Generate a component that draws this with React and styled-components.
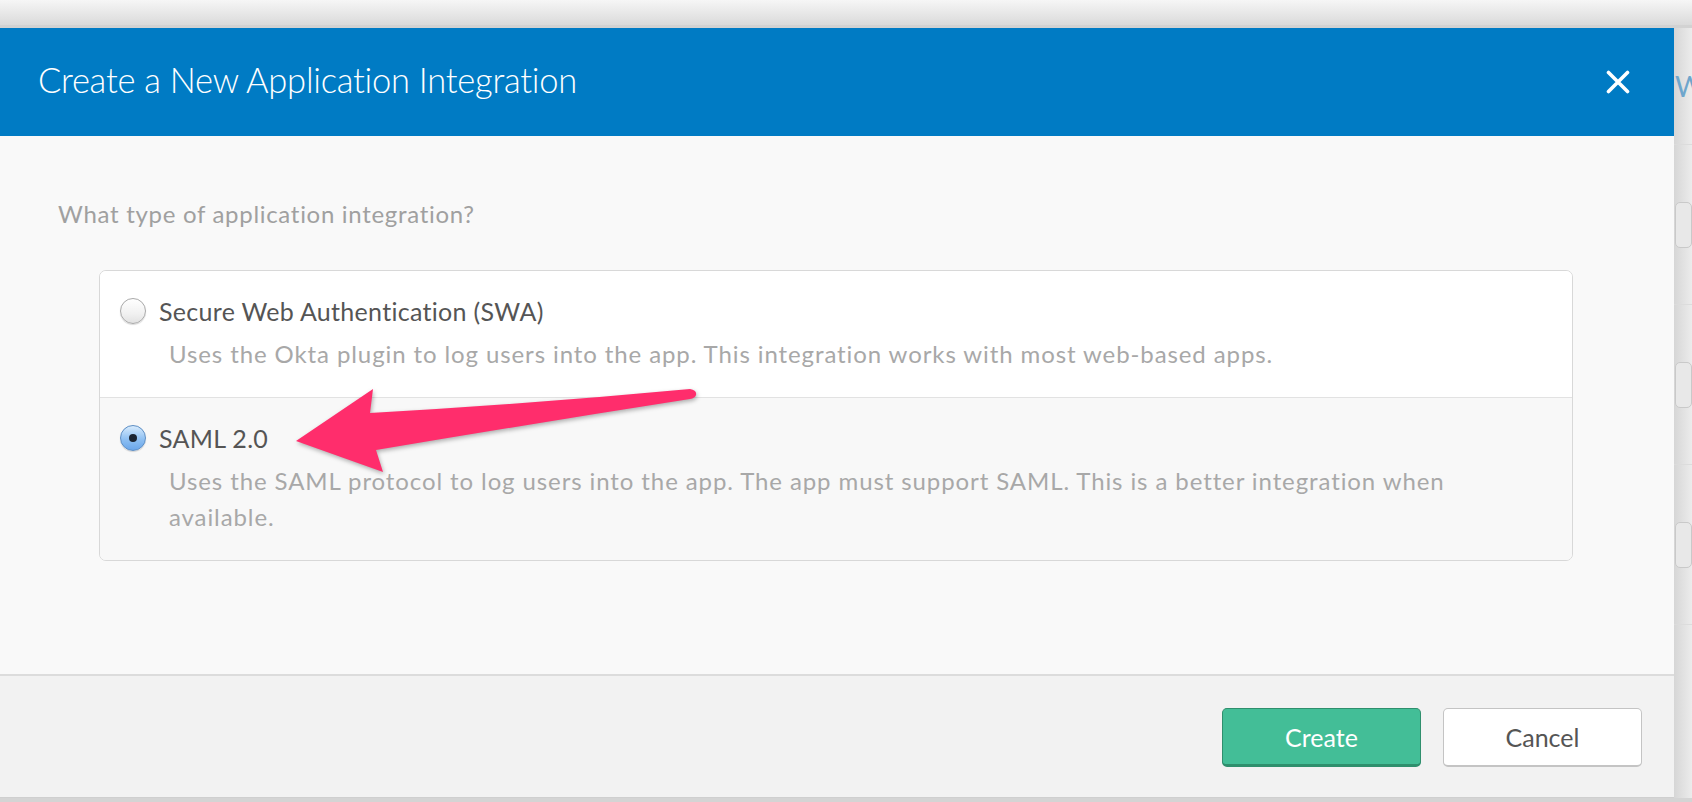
import React, { useState } from "react";
import styled, { createGlobalStyle } from "styled-components";

const GlobalStyle = createGlobalStyle`
  html, body {
    margin: 0;
    padding: 0;
    background: #e6e6e6;
    font-family: "Lato", "Open Sans", "Liberation Sans", sans-serif;
  }
`;

const Page = styled.div`
  width: 1692px;
  height: 802px;
  display: flex;
  flex-direction: column;
  overflow: hidden;
  position: relative;
`;

const TopShade = styled.div`
  height: 25px;
  background: linear-gradient(#f6f6f6, #dadada);
  border-bottom: 3px solid #d2d2d2;
`;

const Row = styled.div`
  display: flex;
  flex: 1;
  min-height: 0;
`;

const Modal = styled.div`
  width: 1674px;
  display: flex;
  flex-direction: column;
  background: #f9f9f9;
  position: relative;
`;

const Header = styled.div`
  height: 108px;
  background: #007bc4;
  display: flex;
  align-items: center;
  justify-content: space-between;
  padding: 0 44px 0 38px;
  box-sizing: border-box;
`;

const Title = styled.h1`
  margin: 0;
  color: #fff;
  font-size: 34.5px;
  font-weight: 300;
  letter-spacing: -0.25px;
  padding-bottom: 6px;
`;

const CloseButton = styled.button`
  width: 24px;
  height: 24px;
  padding: 0;
  border: none;
  background: none;
  cursor: pointer;
  display: flex;
`;

const Body = styled.div`
  flex: 1;
  padding: 63px 101px 0 58px;
`;

const Question = styled.p`
  margin: 0 0 41px;
  color: #a0a0a0;
  font-size: 24px;
  letter-spacing: 0.7px;
  line-height: 30px;
`;

const Card = styled.div`
  margin-left: 41px;
  border: 1px solid #d8d8d8;
  border-radius: 7px;
  overflow: hidden;
  background: #fff;
`;

const Option = styled.label`
  display: block;
  padding: 26px 20px ${(p) => (p.$last ? "25px" : "25px")};
  background: ${(p) => (p.$shaded ? "#f8f8f8" : "#fff")};
  border-top: ${(p) => (p.$divider ? "1px solid #e2e2e2" : "none")};
  cursor: pointer;
`;

const OptionHead = styled.div`
  display: flex;
  align-items: center;
  gap: 13px;
`;

const Radio = styled.span`
  width: 26px;
  height: 26px;
  border-radius: 50%;
  box-sizing: border-box;
  position: relative;
  flex-shrink: 0;
  border: 1px solid ${(p) => (p.$checked ? "#5d8ec4" : "#a9a9a9")};
  background: ${(p) =>
    p.$checked
      ? "linear-gradient(#d7ebfd, #8fc0f2 55%, #6aa6ea)"
      : "linear-gradient(#ffffff, #f1f1f1 60%, #e2e2e2)"};
  box-shadow: 0 1px 1px rgba(0, 0, 0, 0.15);

  &::after {
    content: "";
    display: ${(p) => (p.$checked ? "block" : "none")};
    position: absolute;
    left: 50%;
    top: 50%;
    width: 8px;
    height: 8px;
    margin: -4px 0 0 -4px;
    border-radius: 50%;
    background: #1b2532;
  }
`;

const OptionLabel = styled.span`
  color: #555;
  font-size: 25px;
  letter-spacing: 0.3px;
  line-height: 28px;
`;

const Description = styled.p`
  margin: 11px 80px 0 49px;
  color: #a8a8a8;
  font-size: 24px;
  letter-spacing: 0.9px;
  line-height: 36px;
`;

const Footer = styled.div`
  height: 124px;
  box-sizing: border-box;
  border-top: 2px solid #dcdcdc;
  border-bottom: 1px solid #cfcfcf;
  background: #f2f2f2;
  display: flex;
  align-items: center;
  justify-content: flex-end;
  gap: 22px;
  padding: 2px 32px 0 0;
`;

const Button = styled.button`
  width: 199px;
  height: 59px;
  border-radius: 5px;
  font-family: inherit;
  font-size: 25px;
  cursor: pointer;
  border: 1px solid ${(p) => (p.$primary ? "#2f8f6d" : "#c4c4c4")};
  border-bottom-width: ${(p) => (p.$primary ? "3px" : "2px")};
  background: ${(p) => (p.$primary ? "#43be97" : "#fff")};
  color: ${(p) => (p.$primary ? "#fff" : "#555")};
`;

const SideStrip = styled.div`
  flex: 1;
  background: linear-gradient(90deg, #d6d6d6, #ececec);
  overflow: hidden;
  display: flex;
  flex-direction: column;
`;

const SideLink = styled.div`
  height: 117px;
  color: #6ea6cc;
  font-size: 28px;
  line-height: 28px;
  padding: 44px 0 0 1px;
  box-sizing: border-box;
  border-bottom: 1px solid #dcdcdc;
  white-space: nowrap;
`;

const SideRow = styled.div`
  height: 159px;
  border-bottom: 1px solid #dcdcdc;
  display: flex;
  align-items: center;
  padding-left: 1px;
`;

const SideBox = styled.div`
  width: 40px;
  height: 44px;
  border: 1px solid #c9c9c9;
  border-radius: 5px;
  background: #e8e8e8;
`;

const BottomShade = styled.div`
  height: 4px;
  background: #d4d4d4;
`;

const Arrow = styled.svg`
  position: absolute;
  left: 280px;
  top: 370px;
  width: 440px;
  height: 110px;
  pointer-events: none;
  filter: drop-shadow(1px 2px 2px rgba(0, 0, 0, 0.3));
`;

const options = [
  {
    id: "swa",
    label: "Secure Web Authentication (SWA)",
    text: "Uses the Okta plugin to log users into the app. This integration works with most web-based apps.",
  },
  {
    id: "saml",
    label: "SAML 2.0",
    text: "Uses the SAML protocol to log users into the app. The app must support SAML. This is a better integration when available.",
  },
];

const App = () => {
  const [selected, setSelected] = useState("saml");

  return (
    <Page>
      <GlobalStyle />
      <TopShade />
      <Row>
        <Modal>
          <Header>
            <Title>Create a New Application Integration</Title>
            <CloseButton aria-label="Close">
              <svg width="24" height="24" viewBox="0 0 24 24">
                <path
                  d="M2.5 2.5 L21.5 21.5 M21.5 2.5 L2.5 21.5"
                  stroke="#fff"
                  strokeWidth="3.6"
                  strokeLinecap="round"
                />
              </svg>
            </CloseButton>
          </Header>
          <Body>
            <Question>What type of application integration?</Question>
            <Card>
              {options.map((o, i) => (
                <Option
                  key={o.id}
                  $shaded={i > 0}
                  $divider={i > 0}
                  $last={i === options.length - 1}
                  onClick={() => setSelected(o.id)}
                >
                  <OptionHead>
                    <Radio $checked={selected === o.id} />
                    <OptionLabel>{o.label}</OptionLabel>
                  </OptionHead>
                  <Description>{o.text}</Description>
                </Option>
              ))}
            </Card>
          </Body>
          <Footer>
            <Button $primary>Create</Button>
            <Button>Cancel</Button>
          </Footer>
        </Modal>
        <SideStrip>
          <SideLink>W</SideLink>
          <SideRow>
            <SideBox />
          </SideRow>
          <SideRow>
            <SideBox />
          </SideRow>
          <SideRow>
            <SideBox />
          </SideRow>
        </SideStrip>
      </Row>
      <BottomShade />
      <Arrow viewBox="280 370 440 110">
        <path
          d="M296 441 L373 389 L370 413 Q530 404 690 389 Q697 390 696 395 Q695 398 690 399 Q530 424 376 450 L383 472 Z"
          fill="#ff2d6c"
        />
      </Arrow>
    </Page>
  );
};

export default App;
